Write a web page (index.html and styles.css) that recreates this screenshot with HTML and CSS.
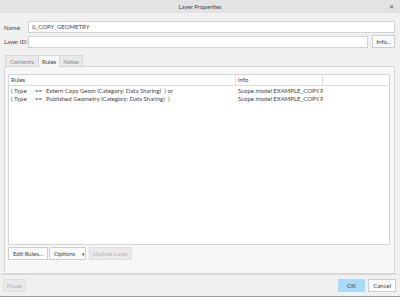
FILE: index.html
```html
<!DOCTYPE html>
<html lang="en">
<head>
    <meta charset="UTF-8">
    <title>Layer Properties</title>
    <link rel="stylesheet" href="styles.css">
</head>
<body>
    <div class="window">
        <div class="titlebar">
            <span class="title">Layer Properties</span>
            <span class="close">&#x2715;</span>
        </div>

        <div class="content">
            <div class="field-row">
                <label class="field-label">Name:</label>
                <div class="input">0_COPY_GEOMETRY</div>
            </div>
            <div class="field-row second">
                <label class="field-label">Layer ID:</label>
                <div class="input short"></div>
                <button class="btn info-btn">Info...</button>
            </div>

            <div class="tabs">
                <div class="tab">Contents</div>
                <div class="tab active">Rules</div>
                <div class="tab">Notes</div>
            </div>

            <div class="panel">
                <div class="table">
                    <div class="row head">
                        <div class="cell c-rule">Rules</div>
                        <div class="cell c-info">Info</div>
                        <div class="cell c-rest"></div>
                    </div>
                    <div class="row">
                        <div class="cell c-rule"><span class="op">( Type</span><span class="eq">==</span>Extern Copy Geom (Category: Data Sharing) &nbsp;) or</div>
                        <div class="cell c-info">Scope model EXAMPLE_COPY.P</div>
                    </div>
                    <div class="row">
                        <div class="cell c-rule"><span class="op">( Type</span><span class="eq">==</span>Published Geometry (Category: Data Sharing) &nbsp;)</div>
                        <div class="cell c-info">Scope model EXAMPLE_COPY.P</div>
                    </div>
                </div>

                <div class="actions">
                    <button class="btn edit-btn">Edit Rules...</button>
                    <button class="btn options-btn">Options <span class="arrow">&#9662;</span></button>
                    <button class="btn disabled update-btn">Update Layer</button>
                </div>
            </div>
        </div>

        <div class="footer">
            <button class="btn disabled pause-btn">Pause</button>
            <div class="spacer"></div>
            <button class="btn ok-btn">OK</button>
            <button class="btn cancel-btn">Cancel</button>
        </div>
    </div>
</body>
</html>
```

FILE: styles.css
```css
body {
    margin: 0;
    font-family: Lato, "Open Sans", sans-serif;
    font-size: 6px;
    color: #444;
}
.window {
    width: 400px;
    height: 297px;
    background-color: #f0f0f1;
    display: flex;
    flex-direction: column;
    border-bottom: 1px solid #9a9a9a;
    box-sizing: border-box;
}
.titlebar {
    height: 13px;
    background-color: #e1e3e5;
    display: flex;
    align-items: center;
    justify-content: center;
    position: relative;
}
.title {
    color: #444;
}
.close {
    position: absolute;
    right: 6px;
    top: 3px;
    font-size: 6px;
    color: #555;
}
.content {
    padding: 8px 5px 0 4px;
    flex: 1;
    display: flex;
    flex-direction: column;
}
.field-row {
    display: flex;
    align-items: center;
    height: 12px;
    white-space: nowrap;
}
.field-row.second {
    margin-top: 2px;
    height: 13px;
}
.field-label {
    width: 24px;
}
.input {
    flex: 1;
    height: 10px;
    background-color: #fff;
    border: 1px solid #d2d2d2;
    line-height: 10px;
    padding-left: 3px;
}
.input.short {
    margin-right: 4px;
}
.btn {
    font-family: inherit;
    font-size: 6px;
    color: #444;
    background-color: #fafafa;
    border: 1px solid #cdcdcd;
    height: 13px;
    padding: 0;
    line-height: 11px;
    white-space: nowrap;
}
.info-btn {
    width: 23px;
}
.tabs {
    display: flex;
    margin-top: 7px;
    margin-left: 1px;
    height: 11px;
}
.tab {
    border: 1px solid #d6d6d6;
    border-bottom: none;
    background-color: #e9e9ea;
    color: #888;
    padding: 0 3px;
    line-height: 11px;
    margin-right: -1px;
}
.tab:first-child {
    padding: 0 4px;
}
.tab.active {
    background-color: #f7f7f7;
    color: #444;
    position: relative;
    z-index: 1;
    margin-bottom: -1px;
}
.panel {
    height: 199px;
    border: 1px solid #d6d6d6;
    background-color: #f7f7f7;
    padding: 7px 4px 0 3px;
    display: flex;
    flex-direction: column;
}
.table {
    height: 169px;
    background-color: #fff;
    border: 1px solid #d4d4d4;
    overflow: hidden;
}
.row {
    display: flex;
    height: 8px;
    line-height: 8px;
}
.row.head {
    height: 10px;
    line-height: 10px;
    border-bottom: 1px solid #dcdcdc;
    margin-bottom: 1px;
}
.cell {
    white-space: nowrap;
    overflow: hidden;
    box-sizing: border-box;
}
.c-rule {
    width: 227px;
    padding-left: 2px;
}
.c-info {
    width: 87px;
    padding-left: 2px;
}
.c-rest {
    flex: 1;
}
.head .c-rule,
.head .c-info {
    border-right: 1px solid #dcdcdc;
}
.op {
    display: inline-block;
    width: 24px;
}
.eq {
    display: inline-block;
    width: 11px;
}
.actions {
    display: flex;
    margin-top: 2px;
    gap: 1px;
}
.edit-btn {
    width: 40px;
}
.options-btn {
    width: 37px;
    text-align: left;
    padding-left: 4px;
    margin-right: 2px;
}
.arrow {
    font-size: 5px;
    margin-left: 5px;
}
.btn.disabled {
    background-color: #eaeaea;
    color: #b5b5b5;
    border-color: #dedede;
}
.update-btn {
    width: 43px;
}
.footer {
    height: 22px;
    border-top: 1px solid #d9d9d9;
    display: flex;
    align-items: flex-start;
    padding: 4px 4px 0 3px;
    box-sizing: border-box;
}
.spacer {
    flex: 1;
}
.pause-btn {
    width: 23px;
}
.ok-btn {
    width: 27px;
    background-color: #a6dbfb;
    border-color: #a6dbfb;
    margin-right: 3px;
}
.cancel-btn {
    width: 28px;
}
```
